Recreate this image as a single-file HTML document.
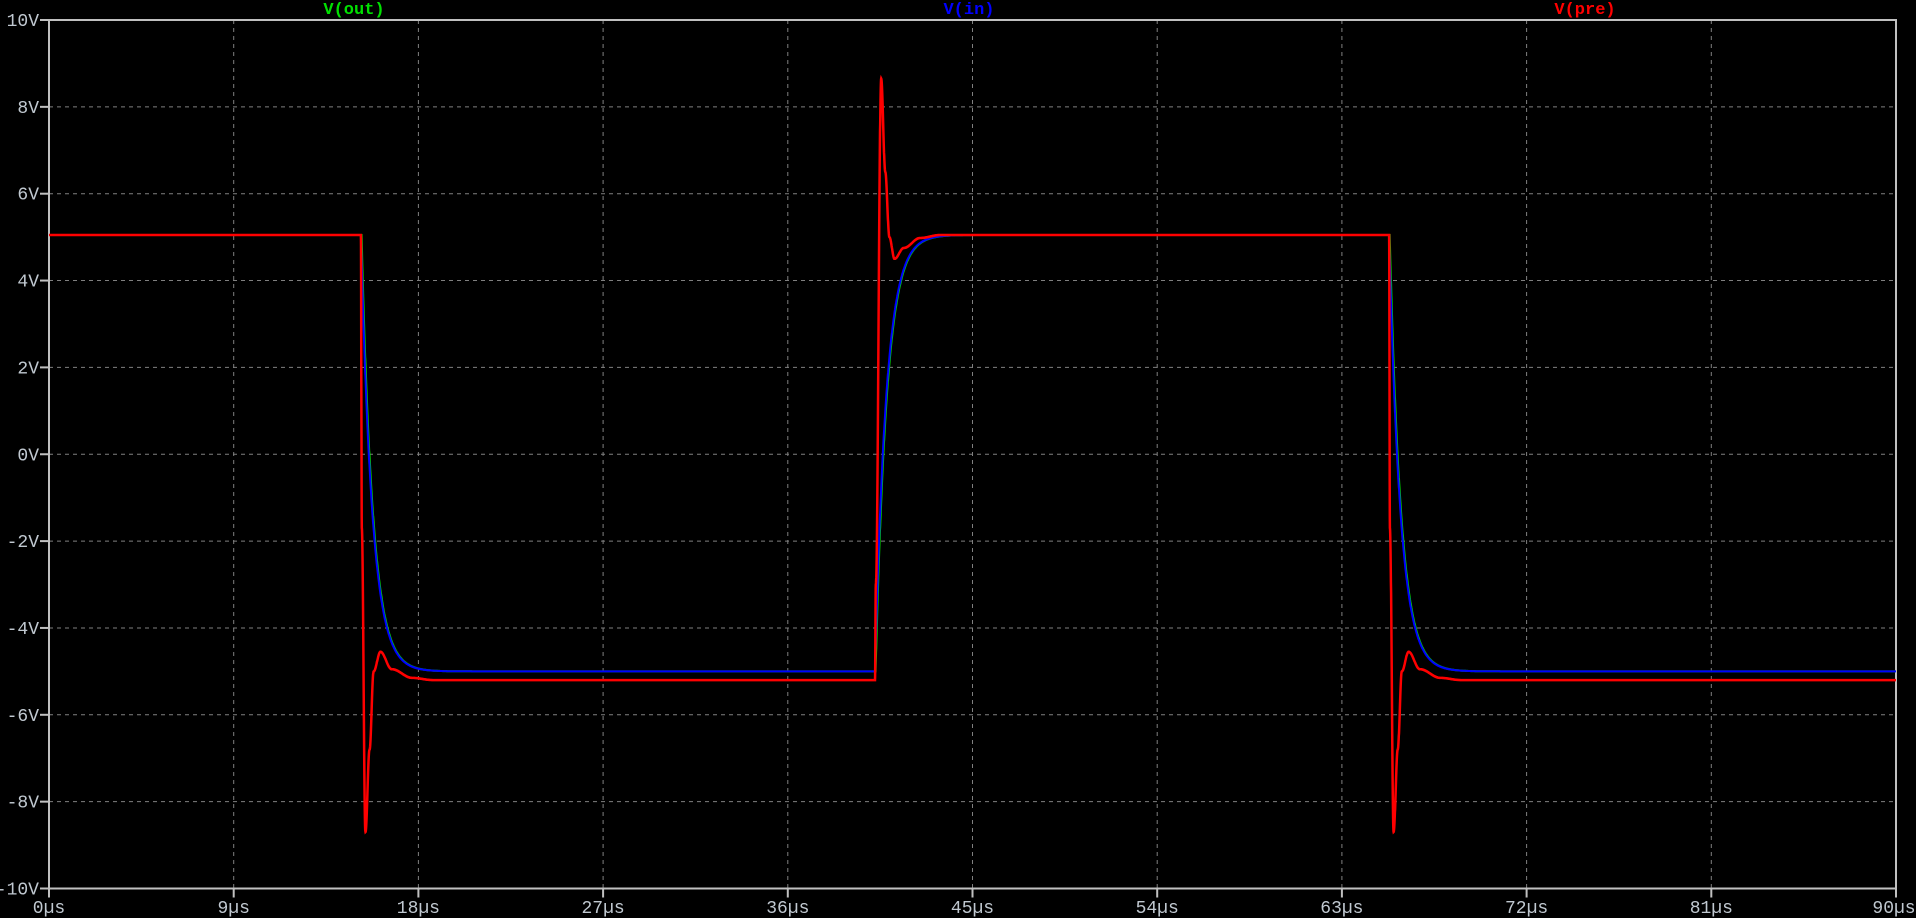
<!DOCTYPE html>
<html><head><meta charset="utf-8"><style>
html,body{margin:0;padding:0;background:#000;width:1916px;height:918px;overflow:hidden}
svg{display:block}
text{font-family:"Liberation Mono","DejaVu Sans Mono",monospace}
</style></head><body>
<svg id="s" width="1916" height="918" xmlns="http://www.w3.org/2000/svg">
<g id="grid" stroke="#808080" stroke-width="1" stroke-dasharray="4,4"></g>
<g id="axes"></g>
<text x="354" y="14" fill="#00e000" font-size="17" font-weight="bold" text-anchor="middle">V(out)</text>
<text x="969" y="14" fill="#0000ff" font-size="17" font-weight="bold" text-anchor="middle">V(in)</text>
<text x="1585" y="14" fill="#ff0000" font-size="17" font-weight="bold" text-anchor="middle">V(pre)</text>
<path id="pg" fill="none" stroke="#00e000" stroke-width="2"/>
<path id="pb" fill="none" stroke="#0000ff" stroke-width="2"/>
<path id="pr" fill="none" stroke="#ff0000" stroke-width="2.5"/>
</svg>
<script>
var L=49,R=1896,T=20,B=888.5;
function X(t){return L+(R-L)*t/90}
function Y(v){return T+(B-T)*(10-v)/20}
var ns="http://www.w3.org/2000/svg";
var grid=document.getElementById('grid'),axes=document.getElementById('axes');
function el(p,tag,a,txt){var e=document.createElementNS(ns,tag);for(var k in a)e.setAttribute(k,a[k]);if(txt!=null)e.textContent=txt;p.appendChild(e);return e}
for(var i=1;i<10;i++){var x=X(i*9);el(grid,'line',{x1:x,y1:T,x2:x,y2:B});}
for(var v=-8;v<=8;v+=2){var y=Y(v);el(grid,'line',{x1:L,y1:y,x2:R,y2:y});}
el(axes,'rect',{x:L,y:T,width:R-L,height:B-T,fill:'none',stroke:'#c0c0c0','stroke-width':2});
for(var v=-10;v<=10;v+=2){var y=Y(v);el(axes,'line',{x1:40,y1:y,x2:L,y2:y,stroke:'#c0c0c0','stroke-width':2});
 el(axes,'text',{x:39,y:y+6,fill:'#c0c8d0','font-size':18,'text-anchor':'end'},v+'V');}
for(var i=0;i<=10;i++){var x=X(i*9);el(axes,'line',{x1:x,y1:B,x2:x,y2:B+9,stroke:'#c0c0c0','stroke-width':2});
 el(axes,'text',{x:(i==10?x-2:x),y:913,fill:'#c0c8d0','font-size':18,'text-anchor':'middle'},(i*9)+'µs');}
var t1=15.2,t2=40.25,t3=65.3,tau=0.55;
function blue(t){
 var lo=-5.0,hi=5.05;
 if(t<t1)return hi;
 if(t<t2){var s=t-t1;return lo+(hi-lo)*Math.exp(-s/tau);}
 if(t<t3){var s=t-t2;return hi+(lo-hi)*Math.exp(-s/tau);}
 var s=t-t3;return lo+(hi-lo)*Math.exp(-s/tau);
}
function interp(k,s){for(var i=1;i<k.length;i++){if(s<=k[i][0]){var a=k[i-1],b=k[i];var f=(s-a[0])/(b[0]-a[0]);f=(1-Math.cos(Math.PI*f))/2;return a[1]+(b[1]-a[1])*f}}return k[k.length-1][1]}
var kf=[[0,5.05],[0.04,-1.7],[0.22,-8.7],[0.42,-6.8],[0.62,-5.0],[0.95,-4.55],[1.5,-4.95],[2.5,-5.15],[3.5,-5.2]];
var kr=[[0,-5.2],[0.04,-3],[0.3,8.65],[0.5,6.5],[0.7,5.0],[0.95,4.5],[1.4,4.75],[2.2,4.98],[3.2,5.05]];
function red(t){if(t<t1)return 5.05;if(t<t2)return interp(kf,t-t1);if(t<t3)return interp(kr,t-t2);return interp(kf,t-t3)}
function path(f){var d='';for(var t=0;t<=90.001;t+=0.005){d+=(d?'L':'M')+X(t).toFixed(1)+','+Y(f(t)).toFixed(1)}return d}
document.getElementById('pg').setAttribute('d',path(function(t){return blue(t-0.03)}));
document.getElementById('pb').setAttribute('d',path(blue));
document.getElementById('pr').setAttribute('d',path(red));
</script>
</body></html>
